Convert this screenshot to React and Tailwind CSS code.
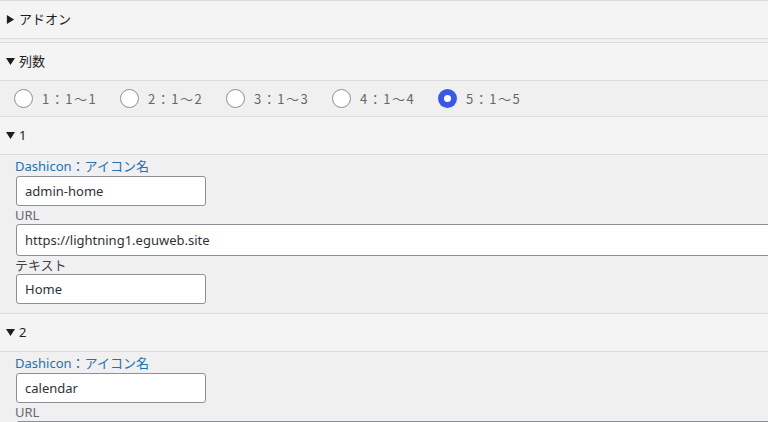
import React, { useState } from "react";

const Caret = ({ open }) => (
  <svg width="9" height="9" viewBox="0 0 10 10" className="shrink-0">
    {open ? (
      <polygon points="0,1 10,1 5,9" fill="#1e1e1e" />
    ) : (
      <polygon points="1,0 9,5 1,10" fill="#1e1e1e" />
    )}
  </svg>
);

const Summary = ({ open = true, children }) => (
  <div className="h-[38px] flex items-center gap-[4px] pl-[6px] bg-[#f4f4f4] border-b border-[#dcdcde] text-[13px] text-[#1e1e1e]">
    <Caret open={open} />
    <span>{children}</span>
  </div>
);

const Field = ({ label, value, labelClass, wide }) => (
  <>
    <div className={`pl-[15px] text-[13px] leading-[18px] ${labelClass}`}>
      {label}
    </div>
    <div className="pl-[16px]">
      <input
        readOnly
        value={value}
        className={`${
          wide ? "w-[800px] h-[32px]" : "w-[190px] h-[30px]"
        } bg-white border border-[#8c8f94] rounded-[3px] px-[8px] text-[13px] text-[#2c3338] outline-none`}
      />
    </div>
  </>
);

const Item = ({ num, icon, url, text }) => (
  <div>
    <Summary>{num}</Summary>
    <div className="bg-[#f0f0f1] pt-[2px] pb-[9px] border-b border-[#dcdcde]">
      <Field
        label="Dashicon：アイコン名"
        value={icon}
        labelClass="text-[#2271b1] pb-[1px]"
      />
      {url !== undefined && (
        <Field label="URL" value={url} labelClass="text-[#646970]" wide />
      )}
      {text !== undefined && (
        <Field label="テキスト" value={text} labelClass="text-[#3c434a]" />
      )}
    </div>
  </div>
);

export default function App() {
  const [cols, setCols] = useState(5);
  const options = [1, 2, 3, 4, 5];

  return (
    <div className="w-[768px] h-[422px] overflow-hidden bg-[#f0f0f1] font-['Noto_Sans','Noto_Sans_CJK_JP',sans-serif]">
      <div className="border-t border-[#dcdcde]">
        <Summary open={false}>アドオン</Summary>
      </div>

      <div className="mt-[3px] border-t border-[#dcdcde]">
        <Summary>列数</Summary>
        <div className="h-[36px] flex items-center pl-[14px] border-b border-[#dcdcde]">
          {options.map((n) => (
            <label
              key={n}
              onClick={() => setCols(n)}
              className="w-[106px] shrink-0 flex items-center gap-[9px] cursor-pointer"
            >
              {cols === n ? (
                <span className="w-[19px] h-[19px] rounded-full bg-[#3858e9] flex items-center justify-center">
                  <span className="w-[7px] h-[7px] rounded-full bg-white" />
                </span>
              ) : (
                <span className="w-[19px] h-[19px] rounded-full bg-white border border-[#8c8f94]" />
              )}
              <span className="text-[13px] tracking-[1.5px] text-[#646970] font-['Noto_Sans_CJK_JP',sans-serif]">
                {n}：1～{n}
              </span>
            </label>
          ))}
        </div>
      </div>

      <Item num="1" icon="admin-home" url="https://lightning1.eguweb.site" text="Home" />
      <Item num="2" icon="calendar" url="" />
    </div>
  );
}
